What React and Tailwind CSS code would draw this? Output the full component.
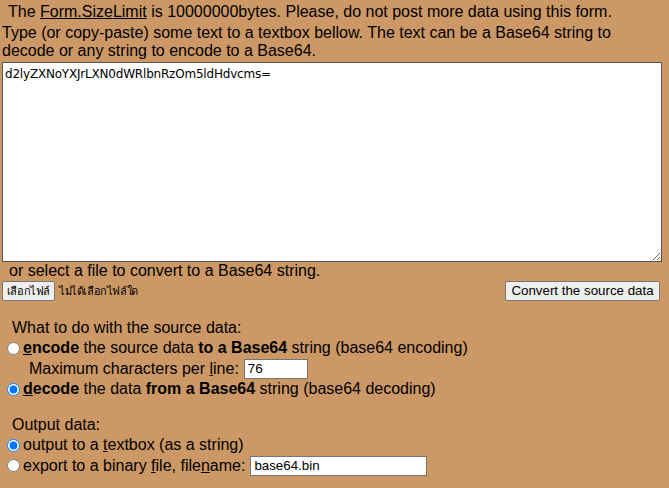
import React from "react";

function Radio({ checked, name }) {
  return (
    <input
      type="radio"
      name={name}
      defaultChecked={checked}
      className="m-0 ml-[7px] mr-[3px] h-[13px] w-[13px] shrink-0"
    />
  );
}

export default function App() {
  return (
    <div className="w-[669px] h-[488px] overflow-hidden bg-[#cc9966] text-black font-['Liberation_Sans',Arial,sans-serif] text-[16px] leading-[18px]">
      <p className="pl-[8px] pt-[3px]">
        The <span className="underline">Form.SizeLimit</span> is 10000000bytes. Please, do not post more data using this form.
      </p>
      <p className="pl-[2px] mt-[3px] pr-[40px]">
        Type (or copy-paste) some text to a textbox bellow. The text can be a Base64 string to decode or any string to encode to a Base64.
      </p>
      <textarea
        defaultValue="d2lyZXNoYXJrLXN0dWRlbnRzOm5ldHdvcms="
        className="block ml-[2px] mt-[2px] w-[660px] h-[200px] bg-white border border-[#555555] px-[2px] py-[4px] font-['DejaVu_Sans',Tahoma,sans-serif] text-[12px] tracking-[-0.2px] leading-[15px] text-black outline-none"
      />
      <p className="pl-[9px] h-[18px]">or select a file to convert to a Base64 string.</p>
      <div className="flex items-center justify-between mt-[1px] ml-[2px] mr-[9px] h-[20px]">
        <div className="flex items-center">
          <button className="h-[20px] w-[53px] px-0 bg-[#efefef] border border-[#767676] rounded-[2px] text-[11px] tracking-[-0.4px] leading-[16px] font-['Liberation_Sans','Noto_Sans',sans-serif]">
            เลือกไฟล์
          </button>
          <span className="ml-[4px] text-[11px] tracking-[-0.4px] leading-[16px] font-['Liberation_Sans','Noto_Sans',sans-serif]">ไม่ได้เลือกไฟล์ใด</span>
        </div>
        <button className="h-[20px] w-[155px] bg-[#efefef] border border-[#767676] rounded-[2px] text-[13.33px] leading-[16px]">
          Convert the source data
        </button>
      </div>
      <p className="pl-[12px] mt-[18px] h-[18px]">What to do with the source data:</p>
      <div className="flex items-center h-[20px] mt-[1px]">
        <Radio name="r" />
        <span>
          <b><u>e</u>ncode</b> the source data <b>to a Base64</b> string (base64 encoding)
        </span>
      </div>
      <div className="flex items-center h-[21px] pl-[29px]">
        <span>Maximum characters per <u>l</u>ine:</span>
        <input
          type="text"
          defaultValue="76"
          className="ml-[5px] w-[64px] h-[20px] bg-white border border-[#767676] px-[3px] text-[13.33px] text-black outline-none"
        />
      </div>
      <div className="flex items-center h-[20px]">
        <Radio name="r" checked />
        <span>
          <b><u>d</u>ecode</b> the data <b>from a Base64</b> string (base64 decoding)
        </span>
      </div>
      <p className="pl-[12px] mt-[17px] h-[18px]">Output data:</p>
      <div className="flex items-center h-[20px] mt-[1px]">
        <Radio name="o" checked />
        <span>output to a <u>t</u>extbox (as a string)</span>
      </div>
      <div className="flex items-center h-[21px]">
        <Radio name="o" />
        <span>export to a binary <u>f</u>ile, file<u>n</u>ame:</span>
        <input
          type="text"
          defaultValue="base64.bin"
          className="ml-[5px] w-[177px] h-[20px] bg-white border border-[#767676] px-[3px] text-[13.33px] text-black outline-none"
        />
      </div>
    </div>
  );
}
